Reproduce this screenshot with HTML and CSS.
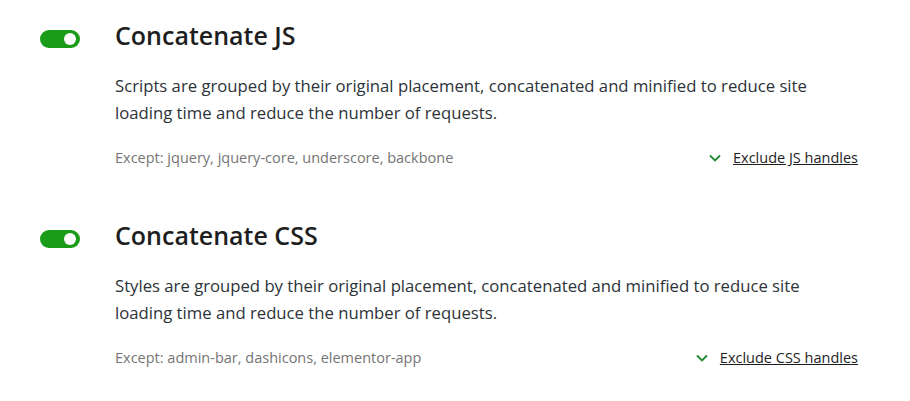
FILE: index.html
```html
<!DOCTYPE html>
<html lang="en">

<head>
    <title>Concatenate</title>
    <link rel="stylesheet" href="styles.css">
</head>

<body>

    <div class="settings">
        <div class="setting">
            <span class="toggle on"><span class="knob"></span></span>
            <div class="content">
                <h2 class="title">Concatenate JS</h2>
                <p class="desc">Scripts are grouped by their original placement, concatenated and minified to reduce site loading time and reduce the number of requests.</p>
                <div class="footer">
                    <span class="except">Except: jquery, jquery-core, underscore, backbone</span>
                    <a class="exclude" href="#">
                        <svg width="14" height="14" viewBox="0 0 14 14"><path d="M2 4.5 L7 9.5 L12 4.5" fill="none" stroke="#1f8a32" stroke-width="1.8"/></svg>
                        <span>Exclude JS handles</span>
                    </a>
                </div>
            </div>
        </div>
        <div class="setting">
            <span class="toggle on"><span class="knob"></span></span>
            <div class="content">
                <h2 class="title">Concatenate CSS</h2>
                <p class="desc">Styles are grouped by their original placement, concatenated and minified to reduce site loading time and reduce the number of requests.</p>
                <div class="footer">
                    <span class="except">Except: admin-bar, dashicons, elementor-app</span>
                    <a class="exclude" href="#">
                        <svg width="14" height="14" viewBox="0 0 14 14"><path d="M2 4.5 L7 9.5 L12 4.5" fill="none" stroke="#1f8a32" stroke-width="1.8"/></svg>
                        <span>Exclude CSS handles</span>
                    </a>
                </div>
            </div>
        </div>
    </div>

</body>

</html>
```

FILE: styles.css
```css
body {
    font-family: "Open Sans", "Noto Sans", sans-serif;
    background-color: #fff;
    color: #1e1e1e;
    margin: 0;
}

.settings {
    padding: 18px 52px 0 40px;
}

.setting {
    display: flex;
    gap: 35px;
    margin-bottom: 51px;
}

.setting:last-child {
    margin-bottom: 0;
}

.toggle {
    flex: none;
    width: 40px;
    height: 18px;
    margin-top: 12px;
    border-radius: 9px;
    background-color: #1a9c1a;
    display: flex;
    align-items: center;
    justify-content: flex-end;
    padding-right: 4px;
    box-sizing: border-box;
}

.knob {
    width: 12px;
    height: 12px;
    border-radius: 50%;
    background-color: #fff;
}

.content {
    flex: 1;
}

.title {
    margin: 0;
    font-size: 25px;
    font-weight: 600;
    line-height: 34px;
    color: #1e1e1e;
}

.desc {
    margin: 20px 0 0;
    max-width: 700px;
    font-size: 16.7px;
    line-height: 27px;
    color: #2c3338;
}

.footer {
    display: flex;
    justify-content: space-between;
    align-items: center;
    margin-top: 22px;
}

.except {
    font-size: 14.5px;
    color: #757575;
}

.exclude {
    display: flex;
    align-items: center;
    gap: 11px;
    font-size: 14.5px;
    color: #1e1e1e;
}
```
